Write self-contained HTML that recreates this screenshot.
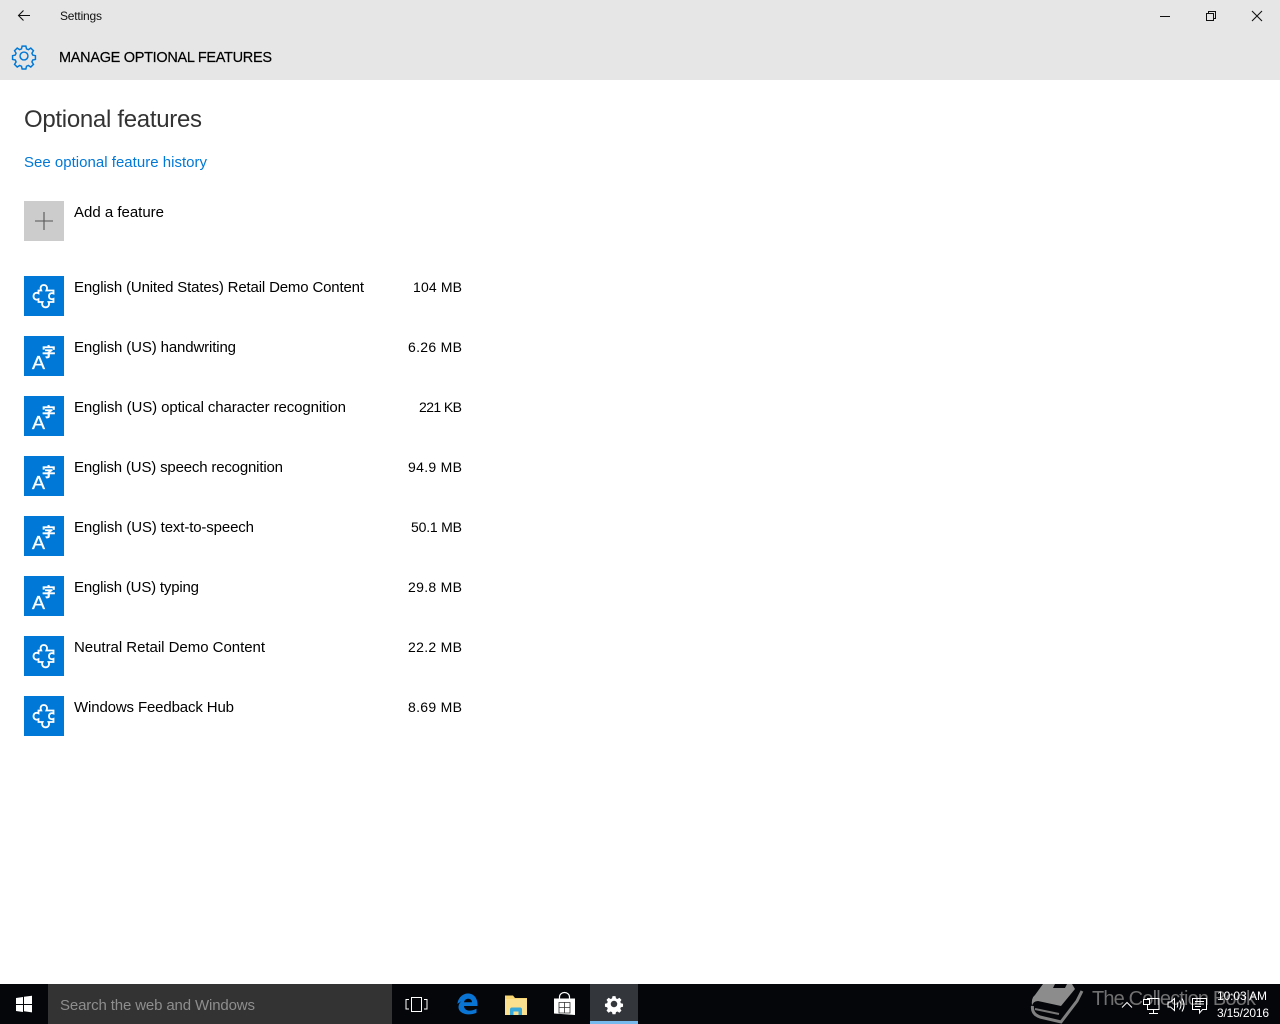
<!DOCTYPE html>
<html lang="en">
<head>
<meta charset="utf-8">
<title>Settings</title>
<style>
html,body{margin:0;padding:0;width:1280px;height:1024px;overflow:hidden;background:#fff}
svg{display:block;position:absolute;left:0;top:0}
text{font-family:"Liberation Sans","Noto Sans CJK SC",sans-serif}
</style>
</head>
<body>
<svg width="1280" height="1024" viewBox="0 0 1280 1024" xmlns="http://www.w3.org/2000/svg">
<defs>
<path id="gearp" fill-rule="evenodd" d="M21.8 44.500h4.400l.7 3.200 2.200.9 2.800-1.800 3.100 3.100-1.800 2.800.9 2.200 3.200.7v4.400l-3.200.7-.9 2.200 1.800 2.800-3.100 3.100-2.800-1.800-2.200.9-.7 3.200h-4.400l-.7-3.200-2.200-.9-2.800 1.800-3.100-3.100 1.800-2.800-.9-2.200-3.200-.7v-4.400l3.200-.7.9-2.200-1.800-2.800 3.100-3.100 2.800 1.800 2.200-.9z"/>
<g id="puz">
<rect x="24" y="276" width="40" height="40" fill="#0078d7"/>
<path d="M38.500 290.500H41.200C39.800 287.500 41 285 43.800 285C46.600 285 47.800 287.500 46.400 290.500H53.500V293.500C51 292.500 49 293.800 49 296.200C49 298.600 51 299.800 53.500 298.800V302H48.500C50 305 48.200 307.300 45.600 307.300C43 307.300 41.200 305 42.600 302H38.500V299.200C35.800 300.500 33.500 298.800 33.500 296.200C33.500 293.600 35.800 292 38.500 293.300Z" fill="none" stroke="#fff" stroke-width="1.800"/>
</g>
<g id="lang">
<rect x="24" y="336" width="40" height="40" fill="#0078d7"/>
<text x="32" y="369" font-size="18" fill="#fff" stroke="#fff" stroke-width=".3" textLength="13" lengthAdjust="spacingAndGlyphs">A</text>
<text x="42" y="357" font-size="13.500" font-weight="700" fill="#fff" stroke="#fff" stroke-width=".3" style="font-family:'Noto Sans CJK SC',sans-serif">字</text>
</g>
</defs>

<!-- Header -->
<rect x="0" y="0" width="1280" height="80" fill="#e6e6e6"/>
<path d="M18.500 15.500H30M23.500 10.500L18.500 15.500L23.500 20.500" fill="none" stroke="#111" stroke-width="1.100"/>
<text x="60" y="20" font-size="12" fill="#111" textLength="42">Settings</text>
<g transform="translate(24 56) scale(.86) translate(-24 -56)">
<use href="#gearp" fill="none" stroke="#0078d7" stroke-width="1.700"/>
<circle cx="24" cy="56" r="4.600" fill="none" stroke="#0078d7" stroke-width="1.700"/>
</g>
<text x="59" y="62" font-size="14.500" fill="#000" stroke="#000" stroke-width=".2" textLength="213">MANAGE OPTIONAL FEATURES</text>
<path d="M1160 16.500H1170" stroke="#111" stroke-width="1"/>
<path d="M1206.500 13.500h7v7h-7zM1208.500 13.500v-2h7v7h-2" fill="none" stroke="#111" stroke-width="1"/>
<path d="M1252 11L1262 21M1262 11L1252 21" stroke="#111" stroke-width="1.100"/>

<!-- Content -->
<text x="24" y="127" font-size="24" fill="#333" textLength="178">Optional features</text>
<text x="24" y="167" font-size="15" fill="#0078d7" textLength="183">See optional feature history</text>

<rect x="24" y="201" width="40" height="40" fill="#ccc"/>
<path d="M44 212V230M35 221H53" stroke="#555" stroke-width="1.100"/>
<text x="74" y="217" font-size="15" fill="#000" textLength="90">Add a feature</text>

<use href="#puz"/>
<text x="74" y="292" font-size="15" fill="#000" textLength="290">English (United States) Retail Demo Content</text>
<text x="413" y="292" font-size="14" fill="#000" textLength="49">104 MB</text>

<use href="#lang"/>
<text x="74" y="352" font-size="15" fill="#000" textLength="162">English (US) handwriting</text>
<text x="408" y="352" font-size="14" fill="#000" textLength="54">6.26 MB</text>

<use href="#lang" y="60"/>
<text x="74" y="412" font-size="15" fill="#000" textLength="272">English (US) optical character recognition</text>
<text x="419" y="412" font-size="14" fill="#000" textLength="43">221 KB</text>

<use href="#lang" y="120"/>
<text x="74" y="472" font-size="15" fill="#000" textLength="209">English (US) speech recognition</text>
<text x="408" y="472" font-size="14" fill="#000" textLength="54">94.9 MB</text>

<use href="#lang" y="180"/>
<text x="74" y="532" font-size="15" fill="#000" textLength="180">English (US) text-to-speech</text>
<text x="411" y="532" font-size="14" fill="#000" textLength="51">50.1 MB</text>

<use href="#lang" y="240"/>
<text x="74" y="592" font-size="15" fill="#000" textLength="125">English (US) typing</text>
<text x="408" y="592" font-size="14" fill="#000" textLength="54">29.8 MB</text>

<use href="#puz" y="360"/>
<text x="74" y="652" font-size="15" fill="#000" textLength="191">Neutral Retail Demo Content</text>
<text x="408" y="652" font-size="14" fill="#000" textLength="54">22.2 MB</text>

<use href="#puz" y="420"/>
<text x="74" y="712" font-size="15" fill="#000" textLength="160">Windows Feedback Hub</text>
<text x="408" y="712" font-size="14" fill="#000" textLength="54">8.69 MB</text>

<!-- Taskbar -->
<rect x="0" y="984" width="1280" height="40" fill="#05060a"/>
<path d="M16 998l7-1v7h-7zM24 996.800l8-1.100v8.300h-8zM16 1005h7v7l-7-1zM24 1005h8v7.400l-8-1.200z" fill="#fff"/>
<rect x="48" y="984" width="344" height="40" fill="#333"/>
<text x="60" y="1010" font-size="15" fill="#8e8e8e" textLength="195">Search the web and Windows</text>

<!-- Task view -->
<path d="M411.500 997.500h10v14h-10zM409 999.500h-3v9.500h3M424 999.500h3v9.500h-3" fill="none" stroke="#fff" stroke-width="1"/>

<!-- Edge -->
<path d="M457.500 1004C458 997.500 463 993.500 468 993.500C474 993.500 478 998.500 477.500 1006H464C464.300 1011 470.500 1012 476.500 1008.800V1012.800C468 1016.500 458 1013.500 458.500 1006.500C458.800 1004 460 1002.500 461.500 1001C460.300 1002 458.500 1003 457.500 1004ZM464 1002.300H472C472 997.600 464.800 997.600 464 1002.300Z" fill="#0a74d4" fill-rule="evenodd"/>

<!-- Explorer -->
<path d="M505 995.500h8l2 2.500h12v17h-22z" fill="#f9d672"/>
<rect x="505" y="999" width="22" height="16" fill="#fbe08f"/>
<path d="M510 1015v-5.500q0-2 2-2h8q2 0 2 2v5.500h-3.500v-3.500h-5v3.500z" fill="#39a9dc"/>

<!-- Store -->
<path d="M554 998.500h21v16.500l-21-1.500z" fill="#fff"/>
<path d="M559.500 998.500v-1.500a5 4.500 0 0 1 10 0v1.500" fill="none" stroke="#fff" stroke-width="1.200"/>
<path d="M564.500 1002v11M559 1007.500h11M559 1002.500h11v10.500h-11z" fill="none" stroke="#333" stroke-width=".8"/>

<!-- Settings button -->
<rect x="590" y="984" width="48" height="40" fill="#33363b"/>
<rect x="590" y="1021" width="48" height="3" fill="#76b9ed"/>
<g transform="translate(614 1004) scale(.68) translate(-24 -56)">
<use href="#gearp" fill="#fff"/>
<circle cx="24" cy="56" r="4.800" fill="#33363b"/>
</g>

<!-- Watermark -->
<path d="M1043 984H1072L1075 989L1061 1006L1038 1001Q1033 1001 1032 1006Q1031 998 1035 995Z" fill="#8c8c8c"/>
<path d="M1055 984h12l-2 4h-12z" fill="#05060a"/>
<path d="M1032.500 1006Q1031.500 1014 1040 1017L1061 1022L1077 1001L1082 991" fill="none" stroke="#808080" stroke-width="3"/>
<path d="M1035 1009L1059 1014" fill="none" stroke="#777" stroke-width="2"/>
<text x="1092" y="1005" font-size="20" fill="#707070" textLength="164">The Collection Book</text>

<!-- Tray -->
<path d="M1122 1007.500l5-5 5 5" fill="none" stroke="#fff" stroke-width="1"/>
<path d="M1147.500 998.500h11.500v11h-11.500zM1153.500 1009.500v3.500M1149 1013.500h9" fill="none" stroke="#fff" stroke-width="1"/>
<rect x="1143.500" y="999.500" width="6" height="5" fill="#05060a" stroke="#fff" stroke-width="1"/>
<path d="M1168 1002h2.500l4-3.500v12l-4-3.500h-2.500zM1177 1002.500q1.500 2.500 0 5M1179.500 1000.500q3 4.500 0 9M1182 998.500q4 6.500 0 13" fill="none" stroke="#fff" stroke-width="1"/>
<path d="M1192.500 998.500h14v11h-4l-3 3.500v-3.500h-7zM1195 1001.500h9M1195 1004h9M1195 1006.500h6" fill="none" stroke="#fff" stroke-width="1"/>
<text x="1217" y="1000" font-size="12" fill="#fff" textLength="50">10:03 AM</text>
<text x="1217" y="1017" font-size="12" fill="#fff" textLength="52">3/15/2016</text>
</svg>
</body>
</html>
